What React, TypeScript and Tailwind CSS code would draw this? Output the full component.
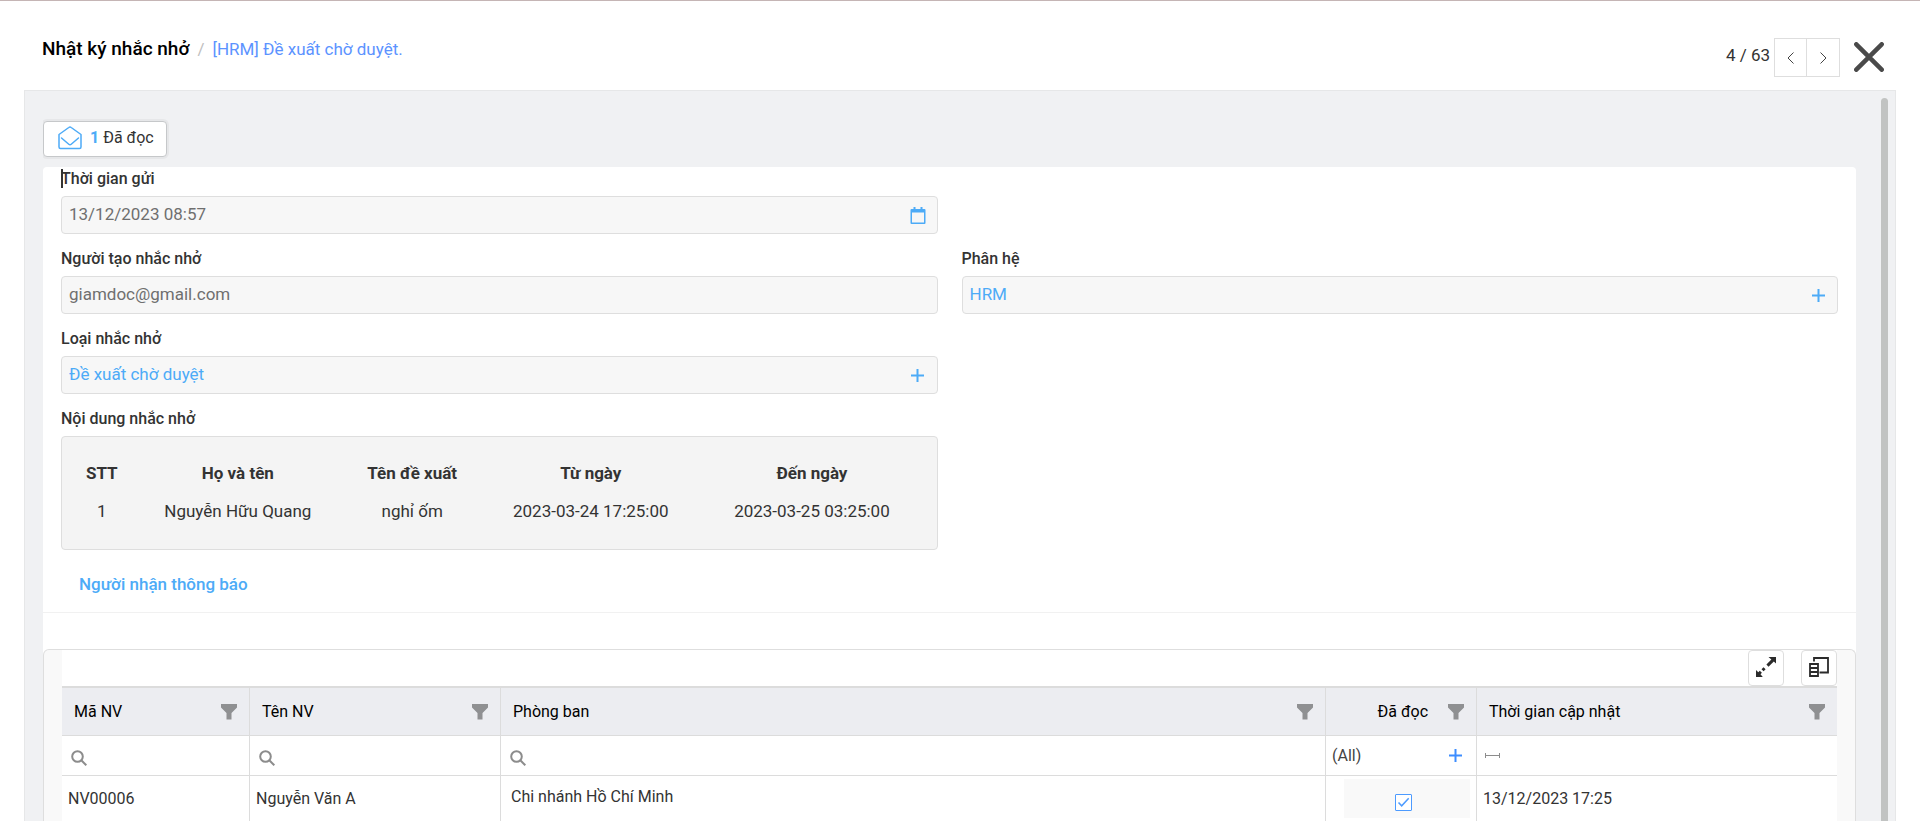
import type { ReactNode } from "react";

const reminderRows = [
  {
    id: 1,
    name: "Nguyễn Hữu Quang",
    title: "nghỉ ốm",
    from: "2023-03-24 17:25:00",
    to: "2023-03-25 03:25:00",
  },
];

const receivers = [
  {
    code: "NV00006",
    name: "Nguyễn Văn A",
    department: "Chi nhánh Hồ Chí Minh",
    read: true,
    updatedAt: "13/12/2023 17:25",
  },
];

function FunnelIcon() {
  return (
    <svg className="h-4 w-4 shrink-0 fill-[#8f9092]" viewBox="0 0 16 16">
      <path d="M0 0h16v3.5L10.5 9v6.5h-5V9L0 3.5z" />
    </svg>
  );
}

function SearchIcon() {
  return (
    <svg
      className="h-4 w-4 shrink-0 fill-none stroke-[#8c8c8c] stroke-2"
      viewBox="0 0 16 16"
    >
      <circle cx="6.5" cy="6.5" r="5.3" />
      <path d="M10.3 10.3l5 5" />
    </svg>
  );
}

function PlusIcon() {
  return (
    <svg
      className="h-[13px] w-[13px] shrink-0 fill-none stroke-current stroke-2"
      viewBox="0 0 13 13"
    >
      <path d="M6.5 0v13M0 6.5h13" />
    </svg>
  );
}

function CalendarIcon() {
  return (
    <svg className="h-[17px] w-4 shrink-0" viewBox="0 0 16 17">
      <path
        fill="currentColor"
        fillRule="evenodd"
        d="M3.5 0h2v2h5V0h2v2H14.5a1 1 0 0 1 1 1v13a1 1 0 0 1-1 1h-13a1 1 0 0 1-1-1V3a1 1 0 0 1 1-1h2zM2 5.5V15.5h12V5.5z"
      />
    </svg>
  );
}

function MailOpenIcon() {
  return (
    <svg
      className="h-6 w-6 fill-none stroke-[#4dabf7] stroke-[1.5]"
      viewBox="0 0 24 24"
      strokeLinejoin="round"
      strokeLinecap="round"
    >
      <path d="M1 8.500v12.500a1.500 1.500 0 0 0 1.500 1.500h19a1.500 1.500 0 0 0 1.500-1.500V8.500L13.200 1.500a2 2 0 0 0-2.400 0z" />
      <path d="M3.500 12l7.300 6.300a1.800 1.800 0 0 0 2.400 0L20.500 12" />
    </svg>
  );
}

type FieldProps = {
  id: string;
  label: string;
  value: string;
  link?: boolean;
  icon?: ReactNode;
  caret?: boolean;
};

function Field({ id, label, value, link, icon, caret }: FieldProps) {
  return (
    <div className="relative">
      {caret && (
        <span className="absolute left-0 top-0.5 h-[19px] w-0.5 bg-[#333]" />
      )}
      <label
        htmlFor={id}
        className="block h-[23px] leading-6 font-medium text-[#333]"
      >
        {label}
      </label>
      <div className="mt-1.5 flex h-[38px] items-center rounded border border-[#dedede] bg-[#f7f7f7] pr-[11px] pl-[7px] text-[17px] text-[#4dabf7]">
        <input
          id={id}
          readOnly
          defaultValue={value}
          className={
            link
              ? "min-w-0 flex-1 bg-transparent text-[#4dabf7] outline-none"
              : "min-w-0 flex-1 bg-transparent text-[#6f6f6f] outline-none"
          }
        />
        {icon && (
          <button
            type="button"
            aria-label={label}
            className="flex h-6 w-4 items-center justify-center"
          >
            {icon}
          </button>
        )}
      </div>
    </div>
  );
}

function HeadCell({ title, center }: { title: string; center?: boolean }) {
  return (
    <th className="h-12 border-r border-b border-[#dcdcdc] px-3 font-normal last:border-r-0">
      <div className="flex items-center">
        <span
          className={
            center ? "flex-1 pr-3 text-right" : "flex-1 text-left"
          }
        >
          {title}
        </span>
        <span className={center ? "pl-2" : ""}>
          <FunnelIcon />
        </span>
      </div>
    </th>
  );
}

function SearchCell({ label }: { label: string }) {
  return (
    <td className="h-10 border-r border-b border-[#dcdcdc] px-[9px]">
      <div className="flex items-center gap-1 pt-1">
        <SearchIcon />
        <input
          aria-label={label}
          className="h-6 min-w-0 flex-1 bg-transparent outline-none"
        />
      </div>
    </td>
  );
}

export default function App() {
  return (
    <div className="flex h-screen flex-col overflow-hidden border-t border-[#c5b5b5] bg-white px-6 font-[Roboto,sans-serif] text-base text-[#333]">
      <header className="flex h-[89px] shrink-0 items-start justify-between pr-3 pl-[18px]">
        <nav className="flex items-baseline pt-8 text-[17px] leading-8">
          <h1 className="text-[19px] leading-8 font-medium text-black">
            Nhật ký nhắc nhở
          </h1>
          <span className="px-2 text-[#c0c0c0]">/</span>
          <a href="#record" className="text-[#5c93ff]">
            [HRM] Đề xuất chờ duyệt.
          </a>
        </nav>
        <div className="flex items-center pt-[37px]">
          <span className="pr-1 pb-1 text-[17px]">4 / 63</span>
          <div className="flex h-[39px] border border-[#dedede]">
            <button
              type="button"
              aria-label="Trước"
              className="flex w-8 items-center justify-center border-r border-[#dedede]"
            >
              <svg
                className="h-3 w-[7px] fill-none stroke-[#444]"
                viewBox="0 0 7 12"
              >
                <path d="M6.500.5L1 6l5.500 5.500" />
              </svg>
            </button>
            <button
              type="button"
              aria-label="Sau"
              className="flex w-8 items-center justify-center"
            >
              <svg
                className="h-3 w-[7px] fill-none stroke-[#444]"
                viewBox="0 0 7 12"
              >
                <path d="M.5.5L6 6 .5 11.500" />
              </svg>
            </button>
          </div>
          <button type="button" aria-label="Đóng" className="ml-3.5 pb-0.5">
            <svg
              className="h-[30px] w-[30px] fill-none stroke-[#4a4a4a] stroke-[4.5]"
              viewBox="0 0 30 30"
              strokeLinecap="round"
            >
              <path d="M2.300 2.300l25.400 25.400M27.700 2.300L2.300 27.700" />
            </svg>
          </button>
        </div>
      </header>

      <div className="flex min-h-0 flex-1 border border-b-0 border-[#e6e7e8] bg-[#f0f1f3] pr-[7px] pl-[18px]">
        <main className="min-w-0 flex-1 overflow-hidden pt-[30px]">
          <button
            type="button"
            className="flex h-9 items-center rounded border border-[#c6c8ca] bg-white pr-3 pl-3.5 pb-0.5 shadow-[0_0_0_2px_#e6e7e9]"
          >
            <MailOpenIcon />
            <span className="pl-2 font-bold text-[#4dabf7]">1</span>
            <span className="pl-1">Đã đọc</span>
          </button>

          <section className="mt-2.5 grid grid-cols-2 gap-x-6 gap-y-[13px] rounded-t bg-white px-[18px] pb-3">
            <Field
              id="sent-at"
              label="Thời gian gửi"
              value="13/12/2023 08:57"
              icon={<CalendarIcon />}
              caret
            />
            <div />
            <Field
              id="creator"
              label="Người tạo nhắc nhở"
              value="giamdoc@gmail.com"
            />
            <Field
              id="module"
              label="Phân hệ"
              value="HRM"
              link
              icon={<PlusIcon />}
            />
            <Field
              id="kind"
              label="Loại nhắc nhở"
              value="Đề xuất chờ duyệt"
              link
              icon={<PlusIcon />}
            />
            <div />
            <div>
              <h2 className="h-[23px] leading-6 font-medium">
                Nội dung nhắc nhở
              </h2>
              <div className="mt-1.5 rounded border border-[#dedede] bg-[#f4f4f4] py-[18px] pr-3.5 pl-2.5">
                <table className="w-full table-fixed text-center text-[17px]">
                  <colgroup>
                    <col className="w-[7%]" />
                    <col className="w-[25%]" />
                    <col className="w-[16%]" />
                    <col className="w-[26%]" />
                    <col className="w-[26%]" />
                  </colgroup>
                  <thead>
                    <tr className="h-[38px]">
                      <th className="font-bold">STT</th>
                      <th className="font-bold">Họ và tên</th>
                      <th className="font-bold">Tên đề xuất</th>
                      <th className="font-bold">Từ ngày</th>
                      <th className="font-bold">Đến ngày</th>
                    </tr>
                  </thead>
                  <tbody>
                    {reminderRows.map((row) => (
                      <tr key={row.id} className="h-[38px]">
                        <td>{row.id}</td>
                        <td>{row.name}</td>
                        <td>{row.title}</td>
                        <td>{row.from}</td>
                        <td>{row.to}</td>
                      </tr>
                    ))}
                  </tbody>
                </table>
              </div>
            </div>
          </section>

          <section className="bg-white">
            <h2 className="flex h-[51px] items-center border-b border-[#f1f1f1] pb-1 pl-9 text-[17px] font-medium text-[#4dabf7]">
              Người nhận thông báo
            </h2>
            <div className="h-9" />
            <div className="rounded-t-md border border-b-0 border-[#dedede] bg-[#f9f9f9] px-[18px]">
              <div className="bg-white">
                <div className="flex justify-end gap-[17px]">
                  <button
                    type="button"
                    aria-label="Toàn màn hình"
                    className="flex h-9 w-9 items-start justify-center rounded border border-[#dedede] pt-1.5"
                  >
                    <svg className="h-5 w-5 fill-[#2b2b2b]" viewBox="0 0 20 20">
                      <path d="M12.500 0H20v6.500l-2.200-2.100-5.300 5.300-2.100-2.100 5-5zM0 20v-7l2.300 2.200 1.500-1.500 2.100 2.100-1.400 1.500L6.800 20zM7.500 10.200l2.100 2.100-2 2-2.100-2.100z" />
                    </svg>
                  </button>
                  <button
                    type="button"
                    aria-label="Chọn cột"
                    className="flex h-9 w-9 items-start justify-center rounded border border-[#dedede] pt-1.5"
                  >
                    <svg
                      className="h-5 w-5 fill-none stroke-[#2b2b2b] stroke-[1.8]"
                      viewBox="0 0 20 20"
                    >
                      <path d="M5 4.500V1h14V15.500H10.500" />
                      <path d="M1 7h8v12H1zM1 11h8M1 15h8" />
                    </svg>
                  </button>
                </div>
                <table className="w-full table-fixed border-separate border-spacing-0 border-t-2 border-[#dcdcdc]">
                  <colgroup>
                    <col className="w-[188px]" />
                    <col className="w-[251px]" />
                    <col />
                    <col className="w-[151px]" />
                    <col className="w-[360px]" />
                  </colgroup>
                  <thead className="bg-[#ecedf1] text-black">
                    <tr>
                      <HeadCell title="Mã NV" />
                      <HeadCell title="Tên NV" />
                      <HeadCell title="Phòng ban" />
                      <HeadCell title="Đã đọc" center />
                      <HeadCell title="Thời gian cập nhật" />
                    </tr>
                  </thead>
                  <tbody>
                    <tr>
                      <SearchCell label="Tìm Mã NV" />
                      <SearchCell label="Tìm Tên NV" />
                      <SearchCell label="Tìm Phòng ban" />
                      <td className="border-r border-b border-[#dcdcdc] pr-3.5 pl-1.5">
                        <button
                          type="button"
                          className="flex w-full items-center justify-between text-[#3d8dff]"
                        >
                          <span className="text-[#444]">(All)</span>
                          <PlusIcon />
                        </button>
                      </td>
                      <td className="border-b border-[#dcdcdc] px-2">
                        <button
                          type="button"
                          aria-label="Khoảng thời gian"
                          className="flex h-6 items-center"
                        >
                          <svg
                            className="h-[5px] w-[15px] fill-none stroke-[#8c8c8c]"
                            viewBox="0 0 15 5"
                          >
                            <path d="M.5 0v5M14.500 0v5M0 2.500h15" />
                          </svg>
                        </button>
                      </td>
                    </tr>
                    {receivers.map((r) => (
                      <tr key={r.code} className="h-[46px]">
                        <td className="border-r border-b border-[#dcdcdc] px-1.5">
                          {r.code}
                        </td>
                        <td className="border-r border-b border-[#dcdcdc] px-1.5">
                          {r.name}
                        </td>
                        <td className="border-r border-b border-[#dcdcdc] px-2.5 pb-1">
                          {r.department}
                        </td>
                        <td className="border-r border-b border-[#dcdcdc] pr-1.5 pl-[18px]">
                          <label className="relative flex h-[39px] items-center justify-center bg-[#f9f9f9] pt-2 pr-2">
                            <input
                              type="checkbox"
                              aria-label="Đã đọc"
                              defaultChecked={r.read}
                              className="peer h-[17px] w-[17px] appearance-none rounded-[1px] border border-[#4d9bff] bg-white"
                            />
                            <svg
                              className="absolute hidden h-[17px] w-[17px] fill-none stroke-[#4d9bff] stroke-[1.5] peer-checked:block"
                              viewBox="0 0 17 17"
                            >
                              <path d="M3.500 8.500l3.200 3.300 7-7.500" />
                            </svg>
                          </label>
                        </td>
                        <td className="border-b border-[#dcdcdc] px-1.5">
                          {r.updatedAt}
                        </td>
                      </tr>
                    ))}
                  </tbody>
                </table>
              </div>
            </div>
          </section>
        </main>
        <div className="ml-[25px] pt-[7px]">
          <div className="h-full w-[7px] rounded-t-full bg-[#c1c3c2]" />
        </div>
      </div>
    </div>
  );
}
